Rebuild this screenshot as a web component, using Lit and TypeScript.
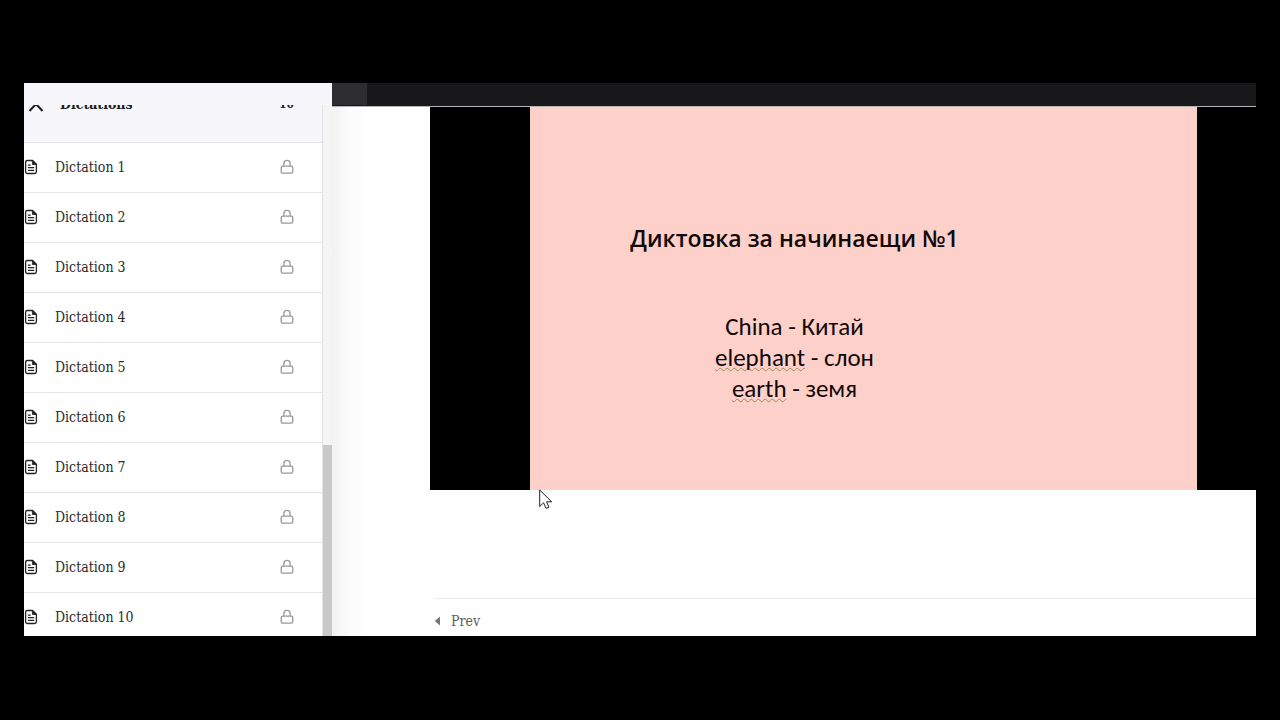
import { LitElement, html, css, svg } from "lit";
import { customElement, state } from "lit/decorators.js";

const LESSONS = Array.from({ length: 10 }, (_, i) => `Dictation ${i + 1}`);

const fileIcon = html`<svg class="file" viewBox="0 0 14 16" width="14" height="16" aria-hidden="true">
  ${svg`<path d="M8.600 1.500H3.400Q1.600 1.500 1.600 3.300v9.400q0 1.800 1.800 1.800h7.200q1.800 0 1.800-1.800V5.300Z" fill="none" stroke="#222" stroke-width="1.300" stroke-linejoin="round"/>
  <path d="M8.400 1.500v4h4Z" fill="#222" stroke="#222" stroke-width=".8" stroke-linejoin="round"/>
  <path d="M4.400 6.200h1.800M4.400 8.700h5.400M4.400 11.300h5.400" fill="none" stroke="#222" stroke-width="1.200" stroke-linecap="round"/>`}
</svg>`;

const lockIcon = html`<svg class="lock" viewBox="0 0 14 16" width="14" height="16" aria-hidden="true">
  ${svg`<rect x="1.200" y="7.200" width="11.600" height="7" rx="1.600" fill="none" stroke="#999" stroke-width="1.300"/>
  <path d="M3.900 7.200V4.500a3.100 3.100 0 0 1 6.200 0v2.700" fill="none" stroke="#999" stroke-width="1.300"/>`}
</svg>`;

@customElement("lesson-sidebar")
export class LessonSidebar extends LitElement {
  @state() private open = true;

  static styles = css`
    :host {
      display: flex;
      flex-direction: column;
      background: #f6f6fb;
      padding-top: 22px;
      font-family: "DejaVu Serif Condensed", "Noto Serif", "Liberation Serif", serif;
      font-size: 14px;
      color: #2a2a2e;
    }
    .scroller {
      flex: 1;
      min-height: 0;
      display: flex;
      overflow: hidden;
    }
    .list {
      flex: 1;
      min-width: 0;
    }
    button {
      font: inherit;
      color: inherit;
      border: 0;
      background: none;
      text-align: left;
      cursor: pointer;
    }
    .section {
      display: flex;
      align-items: center;
      width: 100%;
      height: 79px;
      margin-top: -42px;
      padding: 2px 28px 0 4px;
      box-sizing: border-box;
      font-weight: bold;
      color: #1c1c22;
    }
    .section svg {
      margin-right: 16px;
    }
    .section .name {
      flex: 1;
    }
    .section .count {
      font-size: 12px;
      line-height: 16px;
    }
    ul {
      list-style: none;
      margin: 0;
      padding: 0;
      background: #fff;
    }
    li {
      border-top: 1px solid #e4e4e6;
    }
    .lesson {
      display: flex;
      align-items: center;
      width: 100%;
      height: 49px;
      padding: 0 28px 2px 0;
    }
    .lesson .name {
      flex: 1;
      padding-left: 17px;
    }
    .track {
      width: 10px;
      box-sizing: border-box;
      border-left: 1px solid #e2e2e4;
      background: #f5f5f6;
      display: flex;
      flex-direction: column;
      justify-content: flex-end;
    }
    .thumb {
      height: 36%;
      background: #c9c9c9;
    }
  `;

  render() {
    return html`
      <div class="scroller">
        <div class="list">
          <button class="section" aria-expanded=${this.open} @click=${() => (this.open = !this.open)}>
            <svg viewBox="0 0 16 16" width="16" height="16" aria-hidden="true">
              <path d="M1.500 15 8 8l6.500 7" fill="none" stroke="#1c1c22" stroke-width="2" />
            </svg>
            <span class="name">Dictations</span>
            <span class="count">10</span>
          </button>
          ${this.open
            ? html`<ul>
                ${LESSONS.map(
                  (name) => html`<li>
                    <button class="lesson">${fileIcon}<span class="name">${name}</span>${lockIcon}</button>
                  </li>`
                )}
              </ul>`
            : null}
        </div>
        <div class="track"><div class="thumb"></div></div>
      </div>
    `;
  }
}

@customElement("lesson-slide")
export class LessonSlide extends LitElement {
  static styles = css`
    :host {
      display: block;
      background: #000;
      padding: 0 59px 0 100px;
    }
    .slide {
      height: 383px;
      box-sizing: border-box;
      padding: 112px 138px 0 0;
      background: #fdd0ca;
      color: #120808;
      text-align: center;
      white-space: nowrap;
    }
    h1 {
      margin: 0;
      font: 600 23px/38px "Comic Sans MS", "Open Sans", sans-serif;
    }
    p {
      margin: 54px 0 0;
      font: 25px/31px Carlito, Lato, sans-serif;
    }
    .marked {
      text-decoration: underline wavy #a08c5a 1px;
      text-underline-offset: 1px;
      text-decoration-skip-ink: none;
    }
  `;

  render() {
    return html`<div class="slide">
      <h1>Диктовка за начинаещи №1</h1>
      <p>
        China - Китай<br />
        <span class="marked">elephant</span> - слон<br />
        <span class="marked">earth</span> - земя
      </p>
    </div>`;
  }
}

@customElement("app-root")
export class AppRoot extends LitElement {
  static styles = css`
    :host {
      display: flex;
      min-height: 100vh;
      box-sizing: border-box;
      padding: 83px 24px 84px;
      background: #000;
      position: relative;
    }
    .window {
      flex: 1;
      min-width: 0;
      display: grid;
      grid-template-columns: 308px minmax(0, 1fr);
      grid-template-rows: minmax(0, calc(100vh - 167px));
      background: #fff;
      overflow: hidden;
    }
    main {
      display: flex;
      flex-direction: column;
      min-width: 0;
    }
    .bar {
      height: 23px;
      background: #18181a;
      border-bottom: 1px solid #b4b4b4;
    }
    .tab {
      width: 35px;
      height: 22px;
      background: #2d2d2f;
    }
    .content {
      flex: 1;
      display: flex;
      flex-direction: column;
      justify-content: space-between;
      padding-left: 98px;
      background: linear-gradient(to right, #f2f2f2, #fbfbfb 16px, #fff 40px);
    }
    nav {
      border-top: 1px solid #e8e8e8;
      margin-left: 4px;
      height: 38px;
      padding-top: 7px;
      box-sizing: border-box;
    }
    nav a {
      display: inline-flex;
      align-items: center;
      gap: 11px;
      color: #5c5c60;
      text-decoration: none;
      font: 14px/30px "DejaVu Serif Condensed", "Noto Serif", "Liberation Serif", serif;
    }
    .cursor {
      position: absolute;
      left: 539px;
      top: 489px;
    }
  `;

  render() {
    return html`
      <div class="window">
        <lesson-sidebar></lesson-sidebar>
        <main>
          <div class="bar"><div class="tab"></div></div>
          <div class="content">
            <lesson-slide></lesson-slide>
            <nav>
              <a href="#prev">
                <svg viewBox="0 0 6 10" width="6" height="10" aria-hidden="true">
                  <path d="M6 .5v9L.8 5Z" fill="#77777a" />
                </svg>
                Prev
              </a>
            </nav>
          </div>
        </main>
      </div>
      <svg class="cursor" viewBox="0 0 14 21" width="14" height="21" aria-hidden="true">
        <path d="M.7 1v16.500l3.900-3.700 2.500 5.600 2.900-1.200-2.500-5.400h5.200Z" fill="#fff" stroke="#222" stroke-width="1" />
      </svg>
    `;
  }
}
